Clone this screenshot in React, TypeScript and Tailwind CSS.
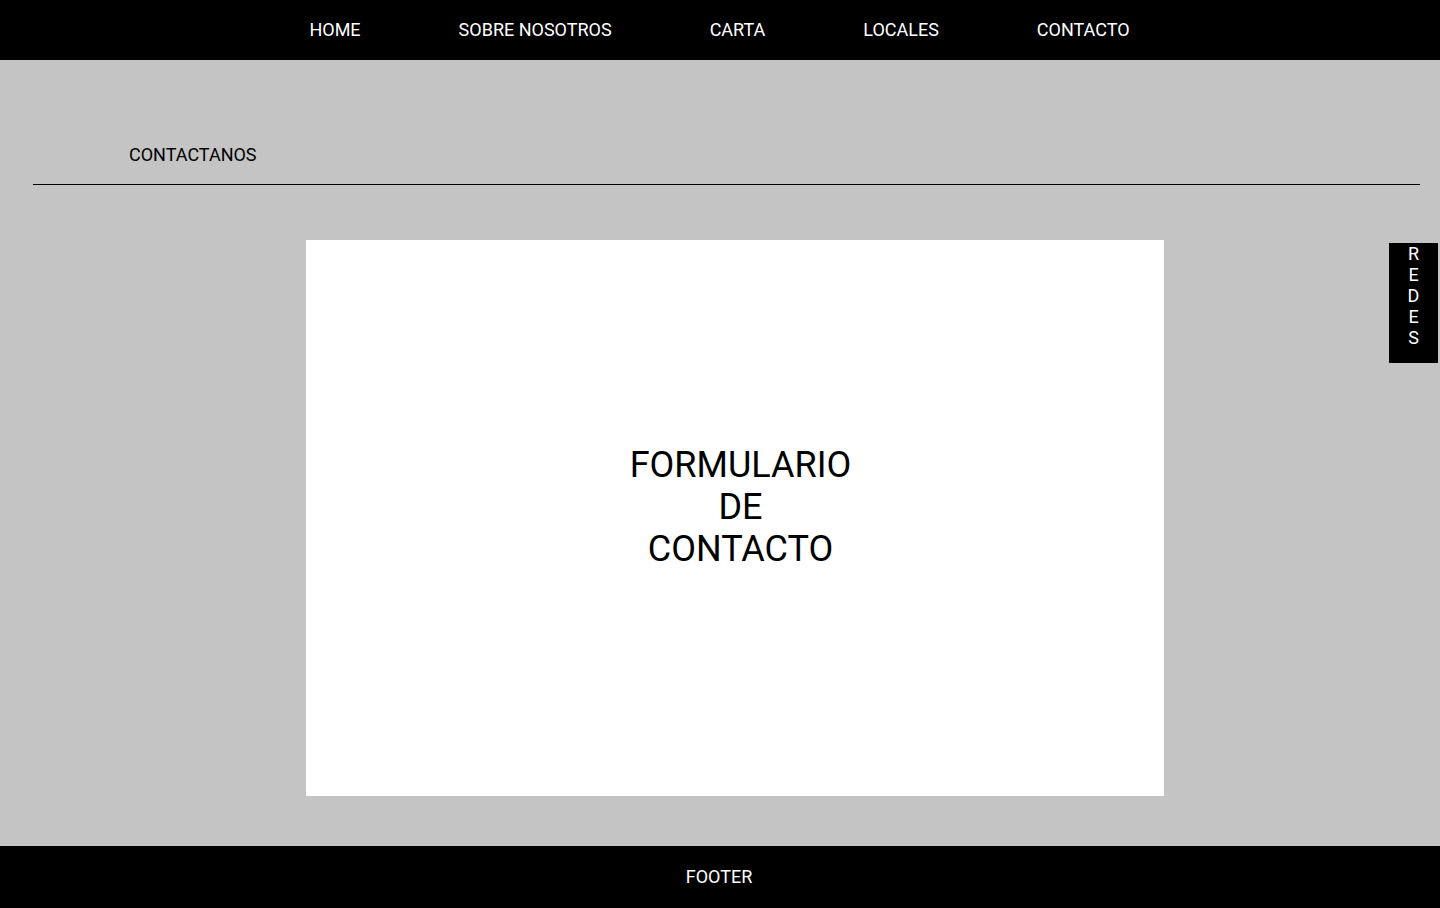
const navItems = ["HOME", "SOBRE NOSOTROS", "CARTA", "LOCALES", "CONTACTO"];

export default function App() {
  return (
    <div className="relative min-h-[908px] bg-[#c4c4c4] font-['Roboto',sans-serif] text-black">
      {/* barra de navegación */}
      <nav className="flex h-[60px] items-center justify-center gap-[98px] bg-black pb-[2px] pr-px text-[18px] leading-[21px] text-white">
        {navItems.map((item) => (
          <a key={item} href="#" className="block">
            {item}
          </a>
        ))}
      </nav>

      <main className="flex flex-col pb-[50px] pt-[84px]">
        <h2 className="pl-[129px] text-[18px] font-normal leading-[21px]">CONTACTANOS</h2>
        <div className="ml-[33px] mr-[20px] mt-[19px] h-px bg-black" />

        {/* formulario */}
        <section className="ml-[306px] mt-[55px] flex h-[556px] w-[858px] justify-center bg-white pl-[11px] pt-[204px]">
          <p className="text-center text-[36px] leading-[42px]">
            FORMULARIO
            <br />
            DE
            <br />
            CONTACTO
          </p>
        </section>
      </main>

      <footer className="flex h-[62px] items-center justify-center bg-black pb-[2px] pr-[2px] text-[18px] leading-[21px] text-white">
        FOOTER
      </footer>

      {/* pestaña lateral de redes */}
      <aside className="absolute right-[2px] top-[243px] flex h-[120px] w-[49px] flex-col items-center bg-black text-[18px] leading-[21px] text-white">
        {"REDES".split("").map((l, i) => (
          <span key={i}>{l}</span>
        ))}
      </aside>
    </div>
  );
}
